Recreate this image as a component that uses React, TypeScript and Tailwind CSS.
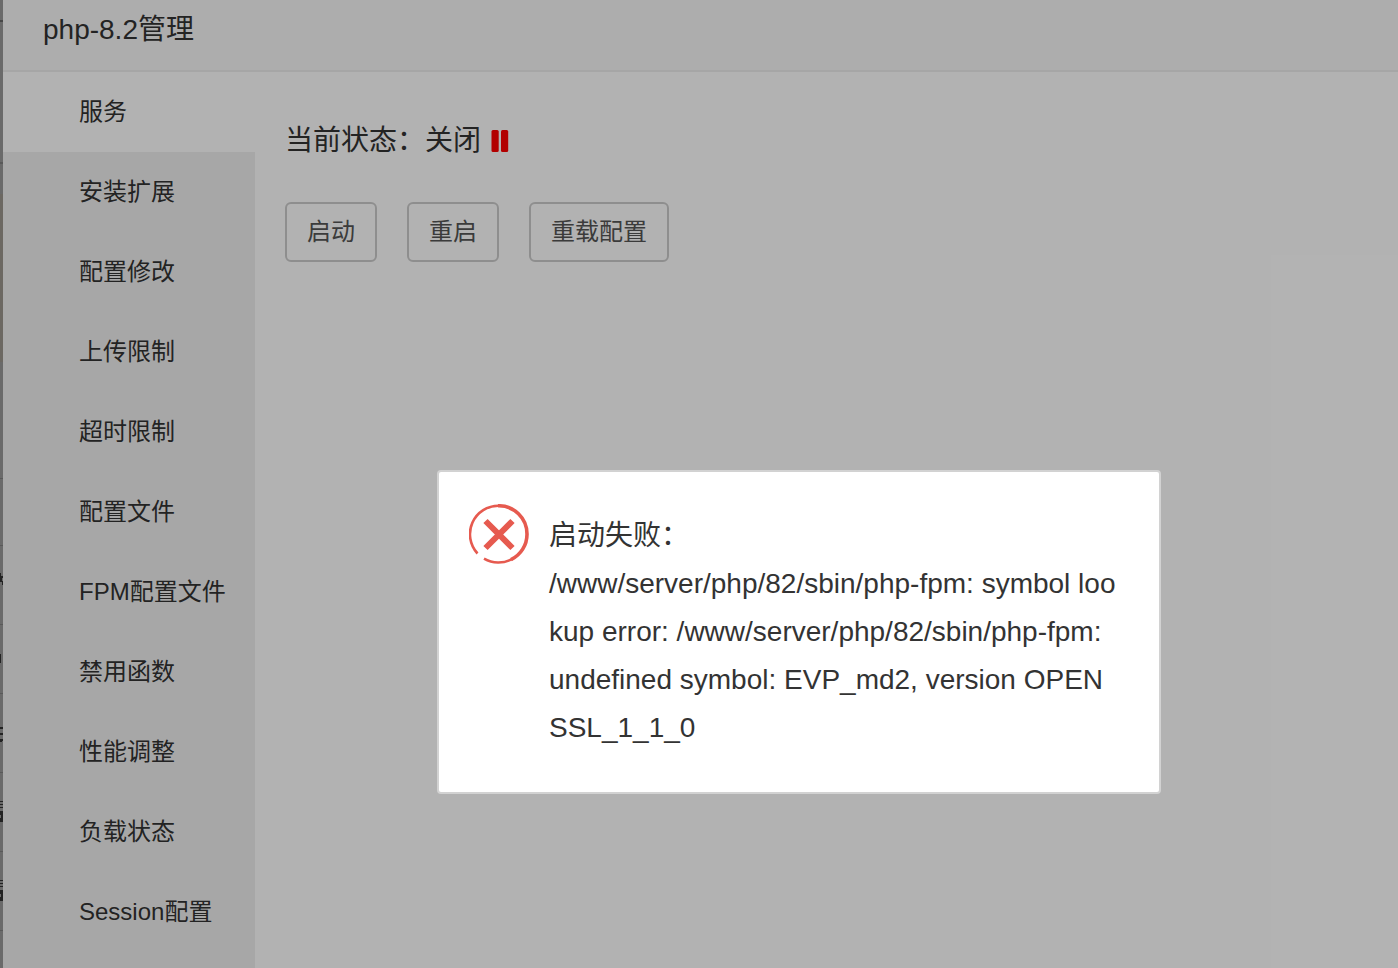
import React from 'react';

const menu = [
  '服务',
  '安装扩展',
  '配置修改',
  '上传限制',
  '超时限制',
  '配置文件',
  'FPM配置文件',
  '禁用函数',
  '性能调整',
  '负载状态',
  'Session配置',
];

const actions = ['启动', '重启', '重载配置'];

const PauseIcon: React.FC = () => (
  <svg width="18" height="22" viewBox="0 0 18 22" fill="#ff0000" aria-hidden="true">
    <rect x="0.5" y="0" width="7.2" height="22" rx="1.5" />
    <rect x="10" y="0" width="7.2" height="22" rx="1.5" />
  </svg>
);

const ErrorIcon: React.FC = () => (
  <svg className="shrink-0" width="60" height="60" viewBox="0 0 60 60" fill="none" stroke="#e65a4f" aria-hidden="true">
    <path d="M8.5 49.5A28.5 28.5 0 0 1 30 1.7" strokeWidth="2.6" />
    <path d="M29 1.8A28.2 28.2 0 0 1 58 30A28.2 28.2 0 0 1 42 55.6" strokeWidth="3.6" />
    <path d="M43 55.1A28.5 28.5 0 0 1 15 54.6" strokeWidth="2.4" />
    <path d="M16.5 17L43.5 44M43.5 17L16.5 44" strokeWidth="6" />
  </svg>
);

// the page that shows behind the window's left edge
const Backdrop: React.FC = () => (
  <svg className="w-[3px] shrink-0 bg-[#999]" aria-hidden="true">
    <rect x="0" y="194" width="3" height="168" fill="#9b958d" />
    <g fill="#808080">
      <rect x="0" y="20" width="3" height="2" fill="#666" />
      <rect x="0" y="162" width="3" height="2" />
      <rect x="0" y="478" width="3" height="1" />
      <rect x="0" y="545" width="3" height="1" />
      <rect x="0" y="624" width="3" height="1" />
      <rect x="0" y="693" width="3" height="1" />
      <rect x="0" y="772" width="3" height="1" />
      <rect x="0" y="851" width="3" height="1" />
      <rect x="0" y="930" width="3" height="1" />
    </g>
    <g fill="#333">
      <path d="M0 573h1v3h2v2h-1v3h1v4h-1v-3h-2z" />
      <rect x="0" y="654" width="1" height="9" />
      <rect x="0" y="727" width="3" height="2" />
      <rect x="0" y="733" width="3" height="2" />
      <path d="M0 739h3v2h-1v1h-2z" />
      <path d="M0 801h3v1h-3zM0 804h3v1h-3zM0 807h3v1h-3zM0 811h3v11h-3v-4h1v-3h-1z" />
      <path d="M0 880h3v1h-3zM0 883h3v1h-3zM0 886h3v1h-3zM0 890h3v11h-3v-4h1v-3h-1z" />
    </g>
  </svg>
);

export default function App() {
  return (
    <div className="relative flex h-screen overflow-hidden bg-white font-['Liberation_Sans','Noto_Sans_CJK_SC',sans-serif] text-[#333]">
      <Backdrop />

      <div className="flex min-w-0 flex-1 flex-col">
        <header className="border-b-2 border-[#eee] bg-[#f8f8f8] px-10 pb-[10px]">
          <h1 className="text-[28px] leading-[60px]">php-8.2管理</h1>
        </header>

        <div className="flex min-h-0 flex-1">
          <nav className="w-[252px] shrink-0 bg-[#f0f0f0]">
            {menu.map((item, i) => (
              <a
                key={item}
                href="#"
                aria-current={i === 0 ? 'page' : undefined}
                className={`block pl-[76px] text-2xl leading-[80px] whitespace-nowrap ${i === 0 ? 'bg-white' : ''}`}
              >
                {item}
              </a>
            ))}
          </nav>

          <main className="flex-1 px-[30px] pt-[46px]">
            <p className="flex items-center gap-[10px] text-[28px] leading-[46px]">
              <span>当前状态：关闭</span>
              <PauseIcon />
            </p>
            <div className="mt-[38px] flex gap-[30px]">
              {actions.map((label) => (
                <button
                  key={label}
                  type="button"
                  className="h-[60px] rounded-md border-2 border-[#ccc] px-5 text-2xl text-[#555]"
                >
                  {label}
                </button>
              ))}
            </div>
          </main>
        </div>
      </div>

      <div className="absolute inset-0 bg-black/30" />

      <div
        role="alertdialog"
        aria-label="启动失败"
        className="absolute top-[470px] left-[437px] flex w-[724px] gap-5 rounded-sm border-2 border-[#d2d2d2] bg-white py-8 pr-10 pl-[30px]"
      >
        <ErrorIcon />
        <p className="py-2 text-[28px] leading-[48px] break-all">
          启动失败：
          <br />
          /www/server/php/82/sbin/php-fpm: symbol lookup error: /www/server/php/82/sbin/php-fpm: undefined symbol:
          EVP_md2, version OPENSSL_1_1_0
        </p>
      </div>
    </div>
  );
}
